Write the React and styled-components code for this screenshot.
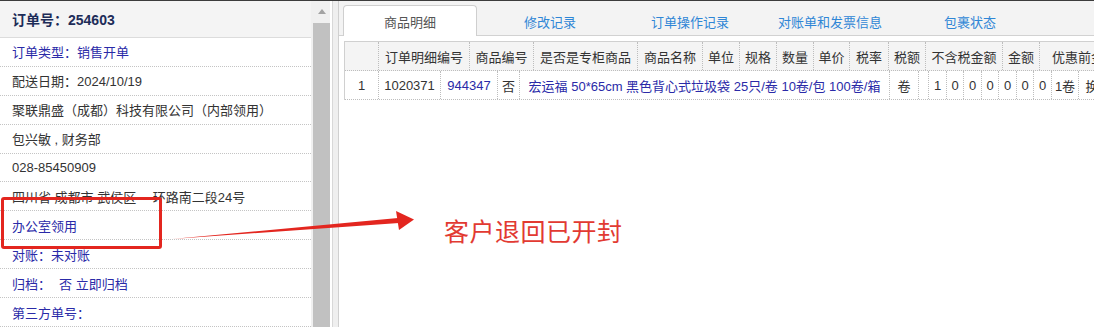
import React from 'react';
import styled, { createGlobalStyle } from 'styled-components';

const GlobalStyle = createGlobalStyle`
  html, body {
    margin: 0;
    padding: 0;
    background: #fff;
  }
  body {
    font-family: "Liberation Sans", "Noto Sans CJK SC", sans-serif;
    font-size: 13px;
    color: #333;
  }
`;

const Page = styled.div`
  position: relative;
  display: flex;
  height: 327px;
  width: 1094px;
  overflow: hidden;
  border-top: 1px solid #3c3c3c;
  box-sizing: border-box;
`;

const InfoPanel = styled.div`
  width: 311px;
  display: flex;
  flex-direction: column;
  flex-shrink: 0;
`;

const InfoHeader = styled.div`
  height: 36px;
  display: flex;
  align-items: center;
  padding-left: 12px;
  background: #f4f4f4;
  border-bottom: 1px solid #dcdcdc;
  font-size: 14px;
  font-weight: bold;
  color: #1d2c58;
`;

const InfoRow = styled.div`
  height: 28px;
  display: flex;
  align-items: center;
  padding-left: 12px;
  border-bottom: 1px dotted #c4c4c4;
  white-space: nowrap;
  color: ${(p) => (p.$link ? '#2a2aa8' : '#333')};
`;

const Gap = styled.span`
  display: inline-block;
  width: ${(p) => p.$w}px;
`;

const ScrollTrack = styled.div`
  width: 19px;
  flex-shrink: 0;
  background: #f0f0f0;
  display: flex;
  flex-direction: column;
  align-items: flex-end;
`;

const ScrollArrow = styled.div`
  width: 17px;
  height: 22px;
  display: flex;
  align-items: center;
  justify-content: center;
  &::before {
    content: '';
    border-left: 4px solid transparent;
    border-right: 4px solid transparent;
    border-bottom: 5px solid #a3a3a3;
    margin-top: -2px;
  }
`;

const ScrollThumb = styled.div`
  width: 17px;
  flex: 1;
  background: #c1c1c1;
`;

const Splitter = styled.div`
  width: 8px;
  flex-shrink: 0;
  background: #efefef;
  border-left: 2px solid #fff;
  box-sizing: border-box;
  box-shadow: inset 1px 0 0 #d8d8d8;
`;

const DetailPanel = styled.div`
  flex: 1;
  display: flex;
  flex-direction: column;
  border-left: 1px solid #d0d0d0;
  min-width: 0;
`;

const TabBar = styled.div`
  height: 34px;
  display: flex;
  align-items: flex-end;
  gap: 6px;
  padding-left: 4px;
  background: #f3f3f3;
  border-bottom: 1px solid #d2d2d2;
`;

const Tab = styled.div`
  width: 134px;
  height: 30px;
  display: flex;
  align-items: center;
  justify-content: center;
  box-sizing: border-box;
  margin-bottom: -1px;
  color: ${(p) => (p.$active ? '#555' : '#2f86d6')};
  background: ${(p) => (p.$active ? '#fff' : 'transparent')};
  border: 1px solid ${(p) => (p.$active ? '#cfcfcf' : 'transparent')};
  border-bottom: none;
  border-radius: 4px 4px 0 0;
  height: ${(p) => (p.$active ? '31px' : '30px')};
`;

const Grid = styled.div`
  margin: 5px 0 0 5px;
  border-top: 1px solid #d0d0d0;
  border-left: 1px solid #d0d0d0;
  white-space: nowrap;
`;

const GridRow = styled.div`
  display: flex;
  height: 28px;
  background: ${(p) => (p.$head ? '#f4f4f4' : '#fff')};
  border-bottom: 1px dotted #bdbdbd;
`;

const Cell = styled.div`
  flex-shrink: 0;
  width: ${(p) => p.$w}px;
  display: flex;
  align-items: center;
  justify-content: center;
  box-sizing: border-box;
  overflow: hidden;
  border-right: 1px dotted #bdbdbd;
  color: ${(p) => (p.$link ? '#2a2aa8' : '#333')};
`;

const RedBox = styled.div`
  position: absolute;
  left: 1px;
  top: 196px;
  width: 161px;
  height: 52px;
  box-sizing: border-box;
  border: 3px solid #e3261f;
  border-radius: 3px;
`;

const Arrow = styled.svg`
  position: absolute;
  left: 0;
  top: 0;
  pointer-events: none;
`;

const Note = styled.div`
  position: absolute;
  left: 444px;
  top: 211px;
  font-family: "Noto Sans CJK SC", sans-serif;
  font-size: 25px;
  color: #e23a32;
  letter-spacing: 0.5px;
`;

const infoRows = [
  { text: '订单类型：销售开单', link: true },
  { text: '配送日期：2024/10/19' },
  { text: '聚联鼎盛（成都）科技有限公司（内部领用）' },
  { text: '包兴敏 , 财务部' },
  { text: '028-85450909' },
  { text: '四川省 成都市 武侯区 一环路南二段24号' },
  { text: '办公室领用', link: true },
  { text: '对账：未对账', link: true },
  { text: 'archive', link: true },
  { text: '第三方单号：', link: true },
];

const tabs = ['商品明细', '修改记录', '订单操作记录', '对账单和发票信息', '包裹状态'];

const headCols = [
  ['', 34], ['订单明细编号', 91], ['商品编号', 64], ['是否是专柜商品', 104],
  ['商品名称', 65], ['单位', 37], ['规格', 37], ['数量', 37], ['单价', 36],
  ['税率', 39], ['税额', 37], ['不含税金额', 77], ['金额', 37], ['优惠前金额', 90],
];

const dataCols = [
  ['1', 34], ['1020371', 62], ['944347', 57, true], ['否', 22],
  ['宏运福 50*65cm 黑色背心式垃圾袋 25只/卷 10卷/包 100卷/箱', 370, true],
  ['卷', 29], ['', 10], ['1', 18], ['0', 17], ['0', 18], ['0', 17], ['0', 18],
  ['0', 17], ['0', 18], ['1卷', 27], ['换货', 40],
];

const App = () => {
  return (
    <>
      <GlobalStyle />
      <Page>
        <InfoPanel>
          <InfoHeader>订单号：254603</InfoHeader>
          {infoRows.map((row, i) => (
            <InfoRow key={i} $link={row.link}>
              {row.text === 'archive' ? (
                <>
                  归档：<Gap $w={8} />否 立即归档
                </>
              ) : (
                row.text
              )}
            </InfoRow>
          ))}
        </InfoPanel>
        <ScrollTrack>
          <ScrollArrow />
          <ScrollThumb />
        </ScrollTrack>
        <Splitter />
        <DetailPanel>
          <TabBar>
            {tabs.map((t, i) => (
              <Tab key={t} $active={i === 0}>
                {t}
              </Tab>
            ))}
          </TabBar>
          <Grid>
            <GridRow $head>
              {headCols.map(([t, w], i) => (
                <Cell key={i} $w={w}>
                  {t}
                </Cell>
              ))}
            </GridRow>
            <GridRow>
              {dataCols.map(([t, w, link], i) => (
                <Cell key={i} $w={w} $link={link}>
                  {t}
                </Cell>
              ))}
            </GridRow>
          </Grid>
        </DetailPanel>

        <RedBox />
        <Arrow width="1094" height="327">
          <polygon points="172,238 398,217 399,222" fill="#e3261f" />
          <polygon points="396,210 414,218.5 399,229" fill="#e3261f" />
        </Arrow>
        <Note>客户退回已开封</Note>
      </Page>
    </>
  );
};

export default App;
